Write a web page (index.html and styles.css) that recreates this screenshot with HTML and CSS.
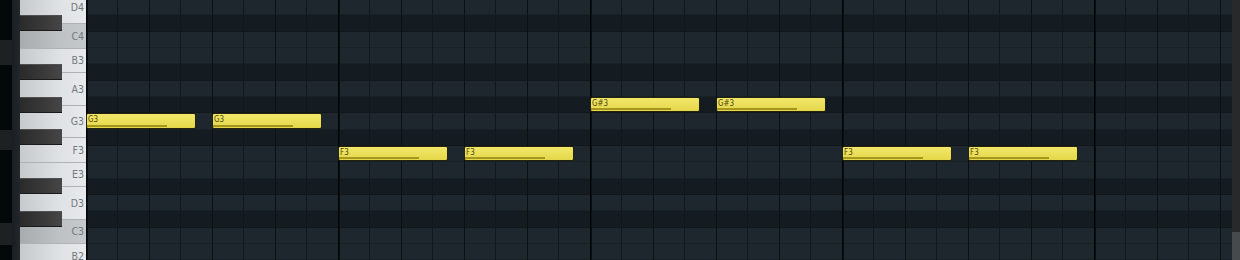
FILE: index.html
```html
<!DOCTYPE html>
<html lang="en">
  <head>
    <meta charset="UTF-8" />
    <meta name="viewport" content="width=device-width, initial-scale=1.0" />
    <title>Piano Roll</title>
    <link rel="stylesheet" href="styles.css">
  </head>
  <body>
    <div class="roll">
      <div class="edge"></div>
      <div class="rail"></div>

      <div class="keys">
        <div class="white k-d4"><span>D4</span></div>
        <div class="white c k-c4"><span>C4</span></div>
        <div class="white k-b3"><span>B3</span></div>
        <div class="white k-a3"><span>A3</span></div>
        <div class="white k-g3"><span>G3</span></div>
        <div class="white k-f3"><span>F3</span></div>
        <div class="white k-e3"><span>E3</span></div>
        <div class="white k-d3"><span>D3</span></div>
        <div class="white c k-c3"><span>C3</span></div>
        <div class="white k-b2"><span>B2</span></div>

        <div class="black k-cs4"></div>
        <div class="black k-as3"></div>
        <div class="black k-gs3"></div>
        <div class="black k-fs3"></div>
        <div class="black k-ds3"></div>
        <div class="black k-cs3"></div>
      </div>

      <div class="grid">
        <div class="note" style="grid-row: 8; grid-column: 1 / span 7"><span>G3</span><i></i></div>
        <div class="note" style="grid-row: 8; grid-column: 9 / span 7"><span>G3</span><i></i></div>
        <div class="note" style="grid-row: 10; grid-column: 17 / span 7"><span>F3</span><i></i></div>
        <div class="note" style="grid-row: 10; grid-column: 25 / span 7"><span>F3</span><i></i></div>
        <div class="note" style="grid-row: 7; grid-column: 33 / span 7"><span>G#3</span><i></i></div>
        <div class="note" style="grid-row: 7; grid-column: 41 / span 7"><span>G#3</span><i></i></div>
        <div class="note" style="grid-row: 10; grid-column: 49 / span 7"><span>F3</span><i></i></div>
        <div class="note" style="grid-row: 10; grid-column: 57 / span 7"><span>F3</span><i></i></div>
      </div>

      <div class="scroll"><div class="thumb"></div></div>
    </div>
  </body>
</html>
```

FILE: styles.css
```css
:root {
  --row: 16.333px;
  --half: 8.1667px;
  --step: 15.75px;
  --light-row: #1d272d;
  --dark-row: #151c21;
  --note-text: #4d4712;
}
html,
body {
  margin: 0;
  height: 260px;
  overflow: hidden;
  background: #0d1215;
}
.roll {
  display: flex;
  height: 260px;
  overflow: hidden;
}
.edge {
  width: 12px;
  flex: none;
  background: linear-gradient(
    to bottom,
    #030809 0 40px,
    #1e2121 40px 65px,
    #030809 65px 130px,
    #1e2121 130px 150px,
    #030809 150px 223px,
    #1e2121 223px 245px,
    #030809 245px
  );
}
.rail {
  width: 8px;
  flex: none;
  background: linear-gradient(to right, #1a1e22, #22272b);
}

/* keyboard */
.keys {
  width: 66px;
  flex: none;
  align-self: flex-start;
  margin-top: -9.5px;
  display: grid;
  grid-template-columns: 66px;
  grid-template-rows: repeat(36, var(--half));
}
.white {
  grid-column: 1;
  display: flex;
  align-items: center;
  justify-content: flex-end;
  padding-right: 2px;
  background: linear-gradient(to right, #c6cacd, #dfe2e5 60%, #e7e9eb);
  border-top: 1px solid #aeb2b6;
  box-sizing: border-box;
}
.white.c {
  background: linear-gradient(to right, #a7abae, #bec2c5 60%, #c6c9cc);
}
.white span {
  font-family: "DejaVu Sans Condensed", "DejaVu Sans", sans-serif;
  font-stretch: condensed;
  font-size: 10.5px;
  line-height: 1;
  color: #74797e;
}
.black {
  grid-column: 1;
  width: 42px;
  z-index: 1;
  background: linear-gradient(to right, #2a2a2a, #3d3d3d 70%, #474747);
  border-top: 1px solid #505050;
  border-bottom: 1px solid #1a1a1a;
  box-sizing: border-box;
}
.k-d4 { grid-row: 1 / 5; }
.k-c4 { grid-row: 5 / 8; }
.k-b3 { grid-row: 8 / 11; }
.k-a3 { grid-row: 11 / 15; }
.k-g3 { grid-row: 15 / 19; }
.k-f3 { grid-row: 19 / 22; }
.k-e3 { grid-row: 22 / 25; }
.k-d3 { grid-row: 25 / 29; }
.k-c3 { grid-row: 29 / 32; }
.k-b2 { grid-row: 32 / 35; }
.k-cs4 { grid-row: 4 / 6; }
.k-as3 { grid-row: 10 / 12; }
.k-gs3 { grid-row: 14 / 16; }
.k-fs3 { grid-row: 18 / 20; }
.k-ds3 { grid-row: 24 / 26; }
.k-cs3 { grid-row: 28 / 30; }

/* note grid */
.grid {
  width: 1146px;
  flex: none;
  align-self: flex-start;
  margin-top: -1.333px;
  display: grid;
  grid-template-columns: repeat(73, var(--step));
  grid-template-rows: repeat(16, var(--row));
  background:
    repeating-linear-gradient(to right, #020405 0 1px, #0a0f12 1px 2px, transparent 2px 252px),
    repeating-linear-gradient(to right, #0b1013 0 1px, transparent 1px 63px),
    repeating-linear-gradient(to right, #11181c 0 1px, transparent 1px 31.5px),
    repeating-linear-gradient(to bottom, transparent 0 15.333px, rgba(0, 0, 0, 0.16) 15.333px 16.333px),
    linear-gradient(
      to bottom,
      var(--light-row) 0 16.333px,
      var(--dark-row) 16.333px 32.667px,
      var(--light-row) 32.667px 65.333px,
      var(--dark-row) 65.333px 81.667px,
      var(--light-row) 81.667px 98px,
      var(--dark-row) 98px 114.333px,
      var(--light-row) 114.333px 130.667px,
      var(--dark-row) 130.667px 147px,
      var(--light-row) 147px 179.667px,
      var(--dark-row) 179.667px 196px
    ) 0 0 / 100% 196px repeat-y;
}
.note {
  margin: 0 0 0.5px 0;
  border: 1px solid #24220a;
  border-radius: 2px;
  background: linear-gradient(to bottom, #f2e76a, #e5d74a);
  box-sizing: border-box;
  display: flex;
  flex-direction: column;
  justify-content: space-between;
  padding: 1px 1px 1px 0;
  overflow: hidden;
}
.note span {
  font-family: "DejaVu Sans Condensed", "DejaVu Sans", sans-serif;
  font-stretch: condensed;
  font-size: 8px;
  line-height: 9px;
  color: var(--note-text);
  padding-left: 1px;
}
.note i {
  display: block;
  width: 75%;
  height: 2px;
  background: #a4961f;
}

/* right scroll strip */
.scroll {
  flex: 1;
  display: flex;
  flex-direction: column;
  justify-content: flex-end;
  background: #27292a;
}
.thumb {
  height: 28px;
  background: #474a4c;
}
```
